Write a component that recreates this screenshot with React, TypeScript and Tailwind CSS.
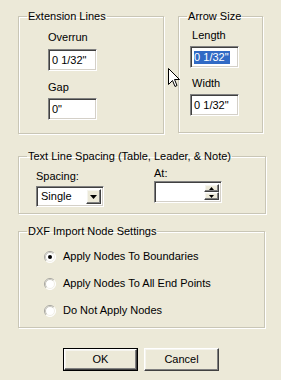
import React from "react";

const font = { fontFamily: '"Liberation Sans", Arial, sans-serif' };

function Field({ value, w, selected }: { value: string; w: string; selected?: boolean }) {
  return (
    <div
      className={`${w} h-[22px] bg-white border border-t-[#808080] border-l-[#808080] border-b-white border-r-white shadow-[inset_1px_1px_0_#404040,inset_-1px_-1px_0_#d4d0c8] flex items-center pl-[3px] text-[11px] leading-[13px] text-black`}
    >
      {selected ? (
        <span className="bg-[#316ac5] text-white pr-[1px]">{value}</span>
      ) : (
        <span>{value}</span>
      )}
    </div>
  );
}

function Radio({ checked, label }: { checked?: boolean; label: string }) {
  return (
    <div className="flex items-center h-[13px]">
      <svg width="12" height="12" viewBox="0 0 12 12" className="mr-[7px]">
        <circle cx="6" cy="6" r="5.5" fill="#ffffff" />
        <path d="M2.1 9.9 A5.5 5.5 0 0 1 9.9 2.1" stroke="#a7a6a0" fill="none" strokeWidth="1" />
        <path d="M9.9 2.1 A5.5 5.5 0 0 1 2.1 9.9" stroke="#ffffff" fill="none" strokeWidth="1" />
        <path d="M2.8 9.2 A4.5 4.5 0 0 1 9.2 2.8" stroke="#c8c6bc" fill="none" strokeWidth="1" />
        <path d="M9.2 2.8 A4.5 4.5 0 0 1 2.8 9.2" stroke="#f1efe6" fill="none" strokeWidth="1" />
        {checked && <circle cx="6" cy="6" r="2" fill="#000000" />}
      </svg>
      <span className="text-[11px] leading-[13px]">{label}</span>
    </div>
  );
}

const legendCls = "ml-[8px] px-[1px] text-[11px] leading-[13px] text-black";
const fsCls = "border border-[#c9c6b6] shadow-[1px_1px_0_#ffffff,inset_1px_1px_0_#ffffff]";

const raised =
  "border border-t-white border-l-white border-b-[#404040] border-r-[#404040] shadow-[inset_-1px_-1px_0_#808080,inset_1px_1px_0_#f5f4ee]";

export default function App() {
  return (
    <div className="relative w-[281px] h-[380px] bg-[#ece9d8] text-black overflow-hidden" style={font}>
      <div className="px-[18px] pt-[10px]">
        <div className="flex">
          <fieldset className={`${fsCls} w-[148px] h-[124px]`}>
            <legend className={legendCls}>Extension Lines</legend>
            <div className="pl-[29px] pt-[8px] flex flex-col">
              <div className="text-[11px] leading-[13px]">Overrun</div>
              <div className="mt-[5px]">
                <Field value={'0 1/32"'} w="w-[49px]" />
              </div>
              <div className="mt-[10px] text-[11px] leading-[13px]">Gap</div>
              <div className="mt-[4px]">
                <Field value={'0"'} w="w-[49px]" />
              </div>
            </div>
          </fieldset>
          <fieldset className={`${fsCls} ml-[14px] w-[86px] h-[123px]`}>
            <legend className={legendCls}>Arrow Size</legend>
            <div className="pl-[11px] pt-[6px] flex flex-col">
              <div className="ml-[2px] text-[11px] leading-[13px]">Length</div>
              <div className="mt-[4px]">
                <Field value={'0 1/32"'} w="w-[49px]" selected />
              </div>
              <div className="ml-[2px] mt-[9px] text-[11px] leading-[13px]">Width</div>
              <div className="mt-[4px]">
                <Field value={'0 1/32"'} w="w-[49px]" />
              </div>
            </div>
          </fieldset>
        </div>

        <fieldset className={`${fsCls} mt-[16px] w-[248px] h-[64px]`}>
          <legend className={legendCls}>Text Line Spacing (Table, Leader, &amp; Note)</legend>
          <div className="flex pl-[17px]">
            <div className="w-[118px] flex flex-col pt-[7px]">
              <div className="text-[11px] leading-[13px]">Spacing:</div>
              <div className="mt-[3px] w-[68px] h-[21px] bg-white border border-t-[#808080] border-l-[#808080] border-b-white border-r-white shadow-[inset_1px_1px_0_#404040,inset_-1px_-1px_0_#d4d0c8] flex items-center p-[2px]">
                <span className="flex-1 pl-[2px] text-[11px] leading-[13px]">Single</span>
                <div className={`${raised} w-[15px] h-full bg-[#ece9d8] flex items-center justify-center`}>
                  <svg width="7" height="4" viewBox="0 0 7 4">
                    <polygon points="0,0 7,0 3.5,4" fill="#000" />
                  </svg>
                </div>
              </div>
            </div>
            <div className="flex flex-col pt-[4px]">
              <div className="text-[11px] leading-[13px]">At:</div>
              <div className="mt-[1px] w-[68px] h-[22px] bg-white border border-t-[#808080] border-l-[#808080] border-b-white border-r-white shadow-[inset_1px_1px_0_#404040,inset_-1px_-1px_0_#d4d0c8] flex justify-end p-[2px]">
                <div className="w-[15px] h-full flex flex-col">
                  <div className={`${raised} flex-1 bg-[#ece9d8] flex items-center justify-center`}>
                    <svg width="5" height="3" viewBox="0 0 5 3">
                      <polygon points="2.5,0 5,3 0,3" fill="#000" />
                    </svg>
                  </div>
                  <div className={`${raised} flex-1 bg-[#ece9d8] flex items-center justify-center`}>
                    <svg width="5" height="3" viewBox="0 0 5 3">
                      <polygon points="0,0 5,0 2.5,3" fill="#000" />
                    </svg>
                  </div>
                </div>
              </div>
            </div>
          </div>
        </fieldset>

        <fieldset className={`${fsCls} mt-[11px] w-[247px] h-[103px]`}>
          <legend className={legendCls}>DXF Import Node Settings</legend>
          <div className="pl-[25px] pt-[12px] flex flex-col gap-[14px]">
            <Radio checked label="Apply Nodes To Boundaries" />
            <Radio label="Apply Nodes To All End Points" />
            <Radio label="Do Not Apply Nodes" />
          </div>
        </fieldset>
      </div>

      <div className="flex justify-center gap-[6px] mt-[20px] pl-[1px]">
        <div className="w-[75px] h-[23px] border border-black">
          <div className={`${raised} w-full h-full bg-[#ece9d8] flex items-center justify-center text-[11px]`}>OK</div>
        </div>
        <div className={`${raised} w-[75px] h-[23px] bg-[#ece9d8] flex items-center justify-center text-[11px]`}>Cancel</div>
      </div>

      <svg className="absolute left-[168px] top-[68px]" width="12" height="20" viewBox="0 0 12 20">
        <polygon
          points="0.5,0.5 0.5,16.5 4.5,12.5 7,18.5 9,17.5 6.5,11.5 11.5,11.5"
          fill="#ffffff"
          stroke="#000000"
          strokeWidth="1"
          strokeLinejoin="miter"
        />
      </svg>
    </div>
  );
}
